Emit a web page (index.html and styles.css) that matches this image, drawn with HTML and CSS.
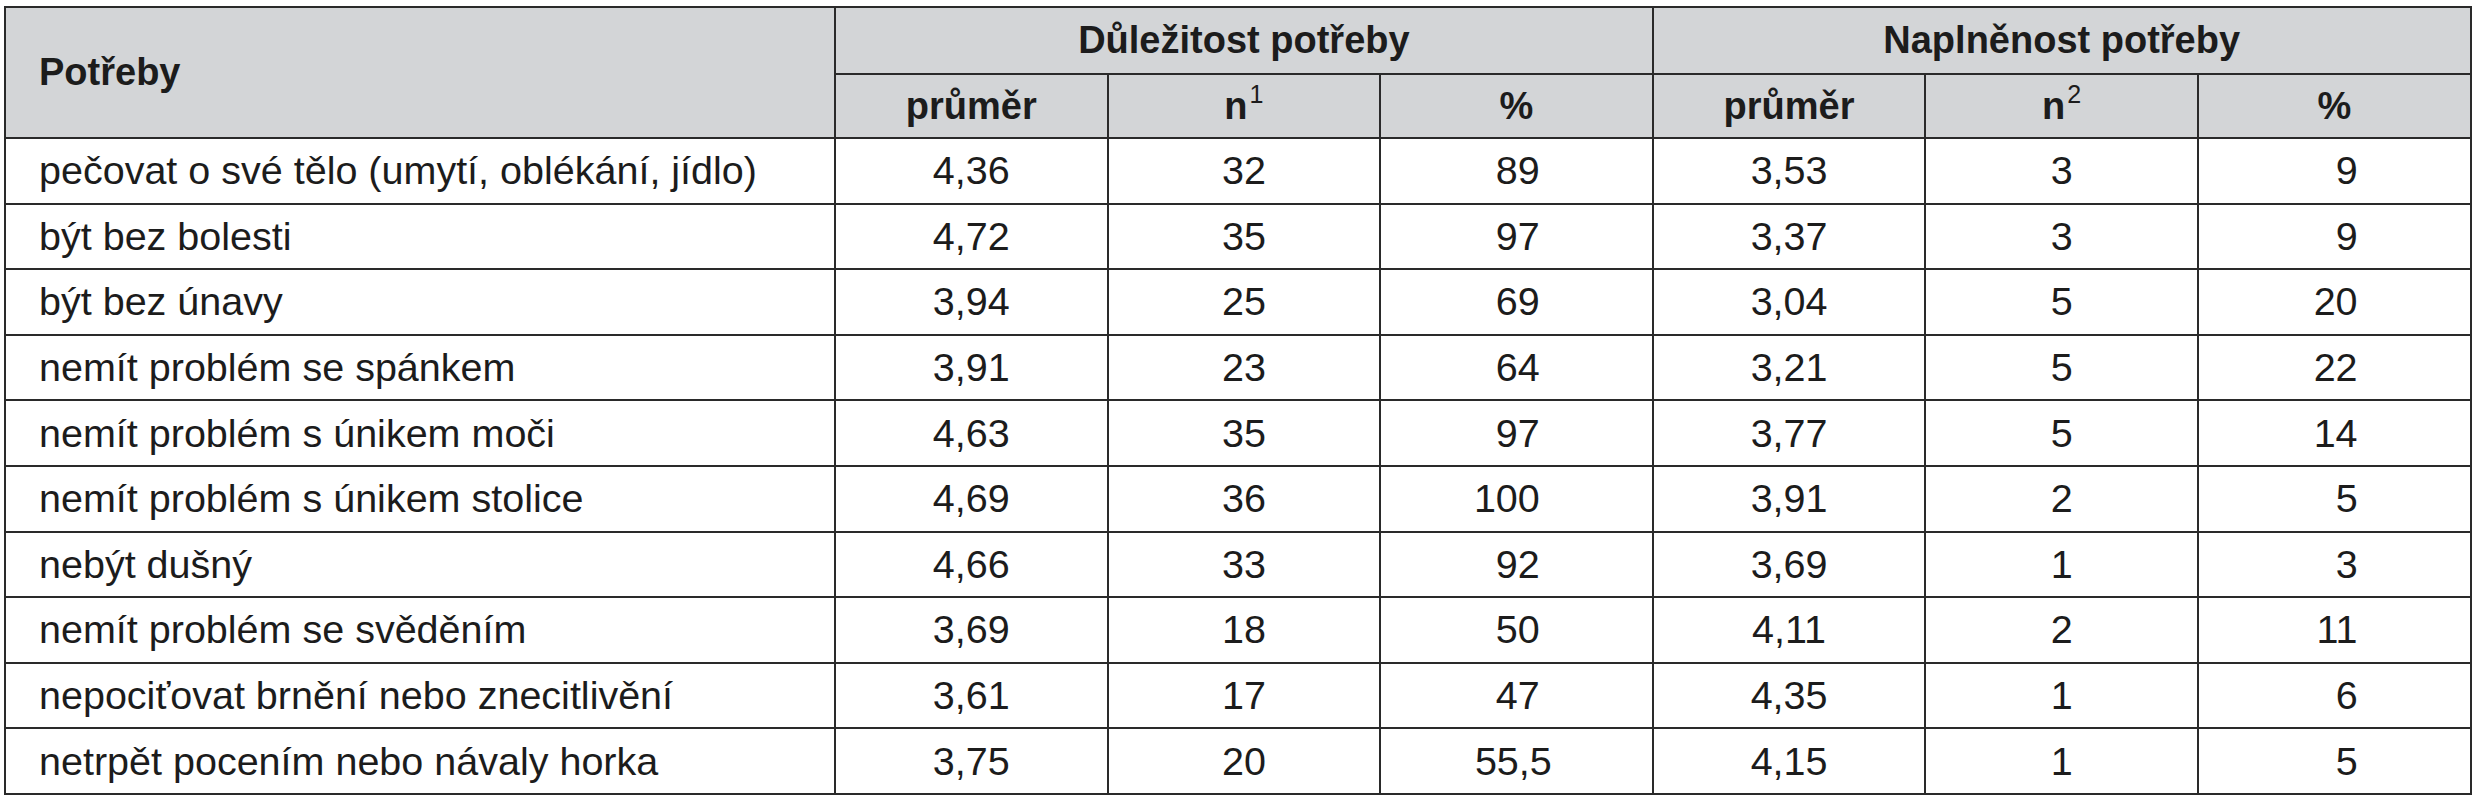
FILE: index.html
```html
<!DOCTYPE html>
<html lang="cs">
<head>
<meta charset="utf-8">
<title>Potřeby</title>
<link rel="stylesheet" href="styles.css">
</head>
<body>
<table class="needs">
  <colgroup>
    <col class="c-name">
    <col class="c-num"><col class="c-num"><col class="c-num">
    <col class="c-num"><col class="c-num"><col class="c-num">
  </colgroup>
  <thead>
    <tr class="h1">
      <th rowspan="2" class="name">Potřeby</th>
      <th colspan="3">Důležitost potřeby</th>
      <th colspan="3">Naplněnost potřeby</th>
    </tr>
    <tr class="h2">
      <th>průměr</th><th>n<sup>1</sup></th><th>%</th>
      <th>průměr</th><th>n<sup>2</sup></th><th>%</th>
    </tr>
  </thead>
  <tbody>
    <tr><td class="name">pečovat o své tělo (umytí, oblékání, jídlo)</td><td>4,36</td><td>32</td><td class="pct">89</td><td>3,53</td><td>3</td><td class="pct">9</td></tr>
    <tr><td class="name">být bez bolesti</td><td>4,72</td><td>35</td><td class="pct">97</td><td>3,37</td><td>3</td><td class="pct">9</td></tr>
    <tr><td class="name">být bez únavy</td><td>3,94</td><td>25</td><td class="pct">69</td><td>3,04</td><td>5</td><td class="pct">20</td></tr>
    <tr><td class="name">nemít problém se spánkem</td><td>3,91</td><td>23</td><td class="pct">64</td><td>3,21</td><td>5</td><td class="pct">22</td></tr>
    <tr><td class="name">nemít problém s únikem moči</td><td>4,63</td><td>35</td><td class="pct">97</td><td>3,77</td><td>5</td><td class="pct">14</td></tr>
    <tr><td class="name">nemít problém s únikem stolice</td><td>4,69</td><td>36</td><td class="pct">100</td><td>3,91</td><td>2</td><td class="pct">5</td></tr>
    <tr><td class="name">nebýt dušný</td><td>4,66</td><td>33</td><td class="pct">92</td><td>3,69</td><td>1</td><td class="pct">3</td></tr>
    <tr><td class="name">nemít problém se svěděním</td><td>3,69</td><td>18</td><td class="pct">50</td><td>4,11</td><td>2</td><td class="pct">11</td></tr>
    <tr><td class="name">nepociťovat brnění nebo znecitlivění</td><td>3,61</td><td>17</td><td class="pct">47</td><td>4,35</td><td>1</td><td class="pct">6</td></tr>
    <tr><td class="name">netrpět pocením nebo návaly horka</td><td>3,75</td><td>20</td><td class="pct dec">55,5</td><td>4,15</td><td>1</td><td class="pct">5</td></tr>
  </tbody>
</table>
</body>
</html>
```
FILE: styles.css
```css
html, body {
  margin: 0;
  background: #ffffff;
}
body {
  padding: 6px 0 0 4px;
  font-family: "Liberation Sans", Arial, Helvetica, sans-serif;
  color: #1c1c1c;
}
.needs {
  border-collapse: collapse;
  table-layout: fixed;
  width: 2466px;
  border: 2px solid #3a3a3a;
}
.c-name { width: 830px; }
.c-num { width: 272.6px; }
.needs th,
.needs td {
  border: 2px solid #2a2a2a;
  padding: 0;
  text-align: center;
  vertical-align: middle;
  white-space: nowrap;
  overflow: hidden;
}
.needs th {
  background: #d3d5d7;
  font-weight: bold;
  font-size: 38px;
}
.needs td {
  font-size: 39.5px;
}
.needs .name {
  text-align: left;
  padding-left: 33px;
}
.needs td.pct {
  text-align: right;
  padding-right: 112px;
}
.needs td.dec {
  padding-right: 100px;
}
.h1 { height: 67px; }
.h2 { height: 64px; }
.needs tbody tr { height: 65.6px; }
.needs sup {
  font-size: 0.66em;
  font-weight: normal;
  line-height: 0;
  vertical-align: 0.62em;
  margin-left: 2px;
}
```
